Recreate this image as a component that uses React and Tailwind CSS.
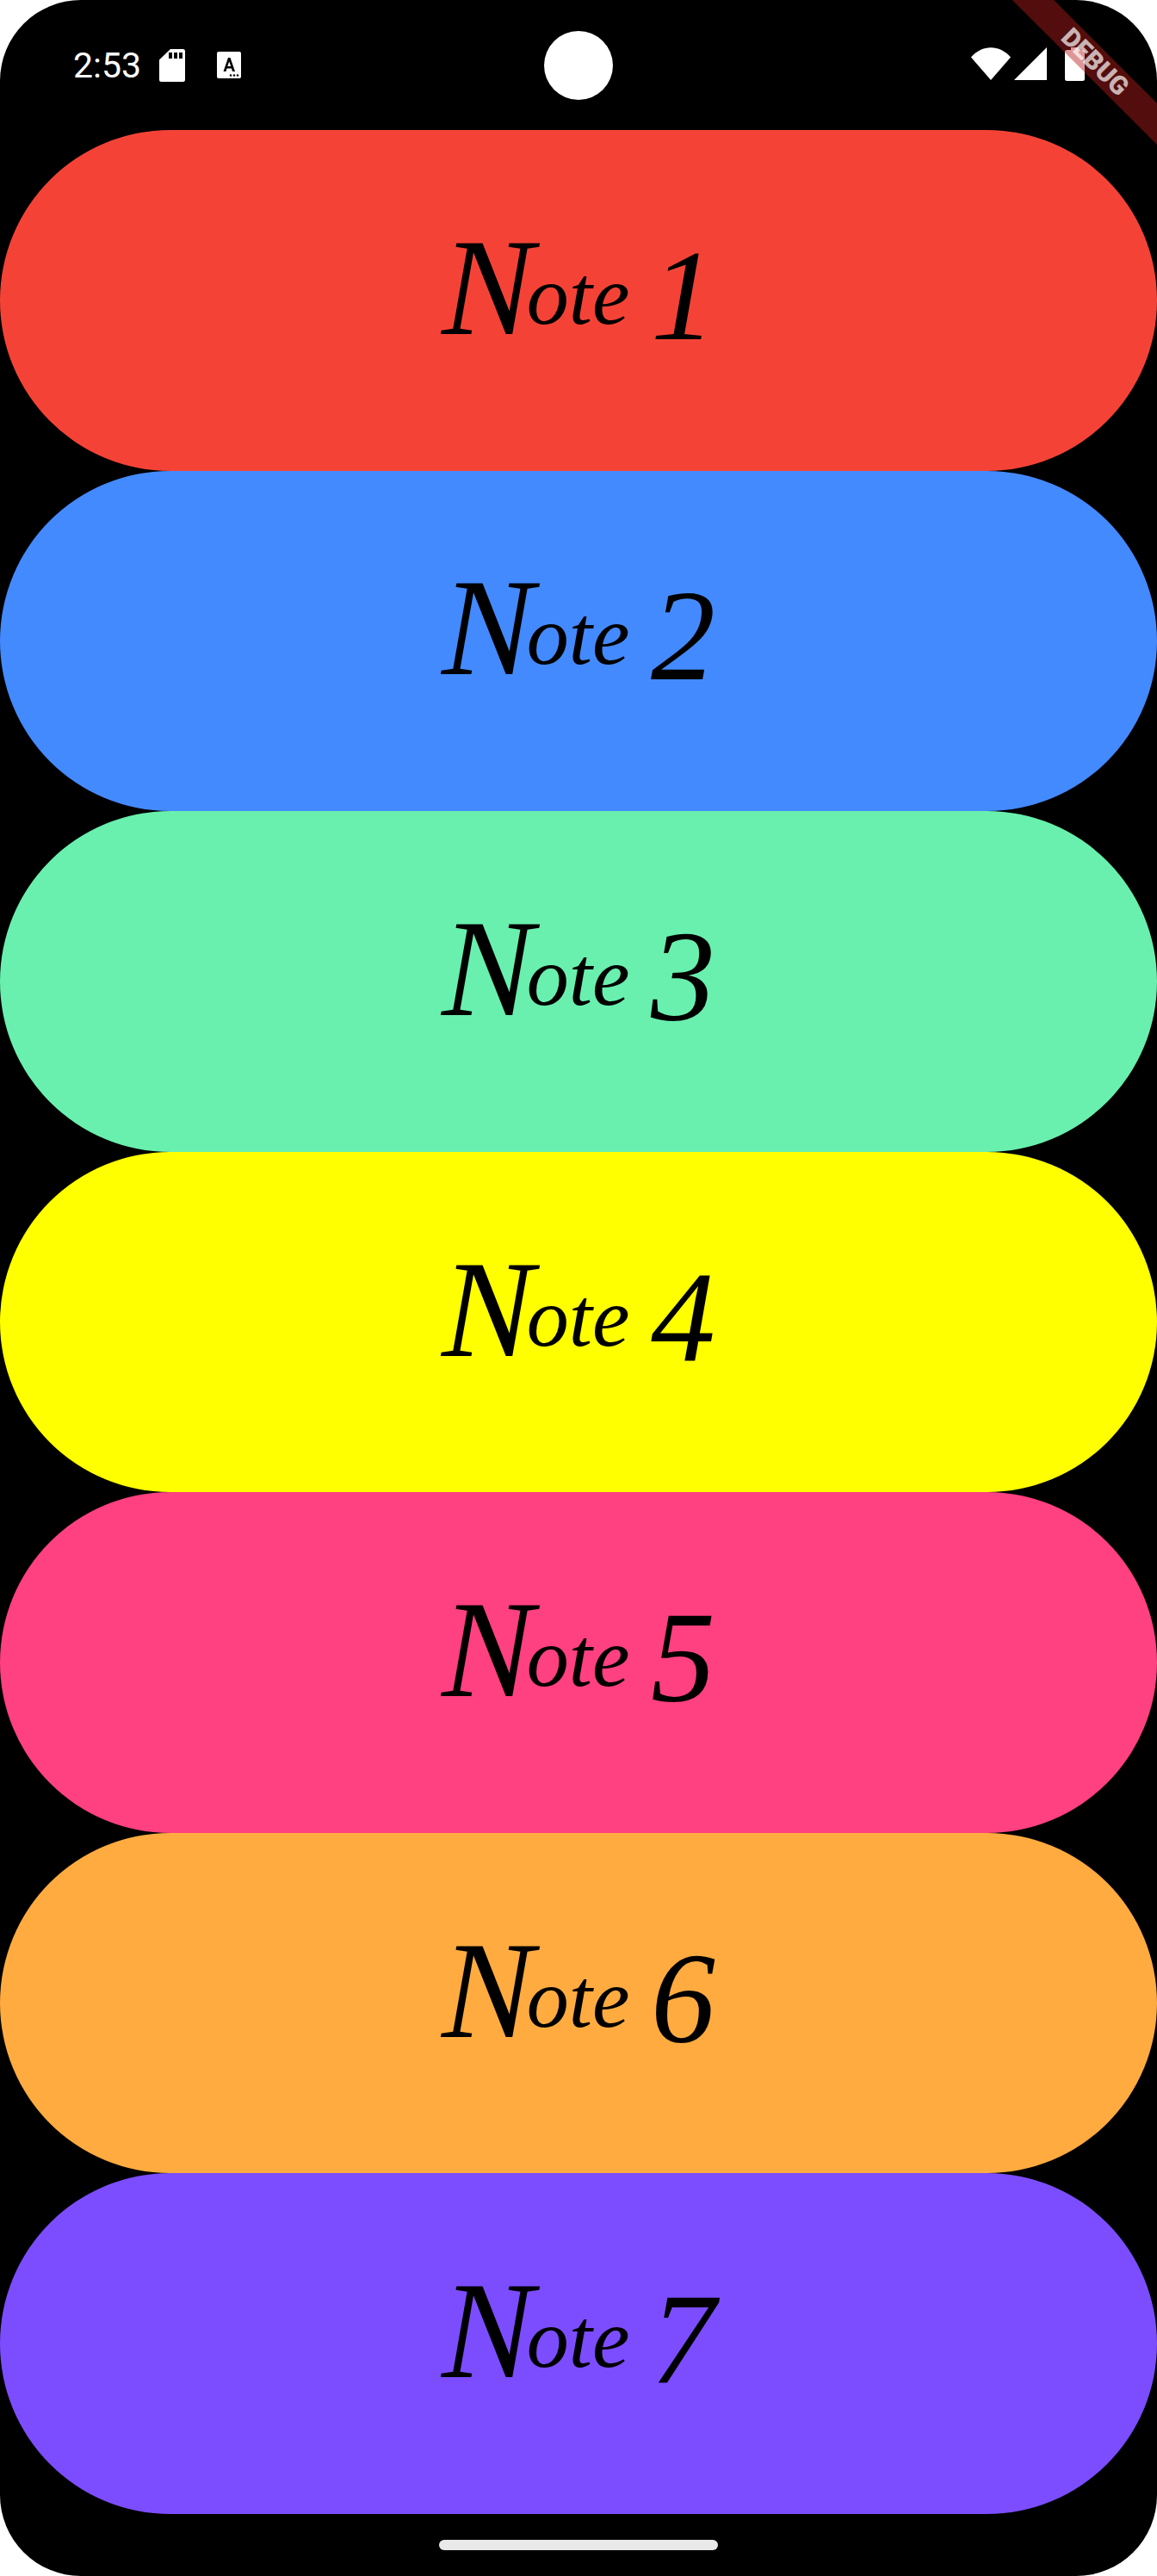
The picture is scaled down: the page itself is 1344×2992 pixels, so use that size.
import React from 'react';

const notes = [
  { digit: '1', color: 'bg-[#f44336]' },
  { digit: '2', color: 'bg-[#448aff]' },
  { digit: '3', color: 'bg-[#69f0ae]' },
  { digit: '4', color: 'bg-[#ffff00]' },
  { digit: '5', color: 'bg-[#ff4081]' },
  { digit: '6', color: 'bg-[#ffab40]' },
  { digit: '7', color: 'bg-[#7c4dff]' },
];

const SdCardIcon = () => (
  <svg width="30" height="38" viewBox="0 0 30 38">
    <path
      fillRule="evenodd"
      fill="#fff"
      d="M13 0H27.5A2.5 2.5 0 0 1 30 2.5V35.500A2.500 2.500 0 0 1 27.500 38H2.500A2.500 2.500 0 0 1 0 35.500V12.500ZM11 4V11H15V4ZM17 4V11H21V4ZM23 4V11H27V4Z"
    />
  </svg>
);

const KeyboardTileIcon = () => (
  <svg width="28" height="31" viewBox="0 0 28 31">
    <rect width="28" height="31" rx="2" fill="#fff" />
    <path d="M13 7H15.500L21 23H18L17 19.500H11.500L10.500 23H7.500ZM14.200 11.500L12.300 17H16.200Z" fill="#000" fillRule="evenodd" />
    <circle cx="16" cy="27.500" r="1.200" fill="#000" />
    <circle cx="20" cy="27.500" r="1.200" fill="#000" />
    <circle cx="24" cy="27.500" r="1.200" fill="#000" />
  </svg>
);

const WifiIcon = () => (
  <svg width="46" height="38" viewBox="0 0 46 38">
    <path d="M0 11.500C13 -3.500 33 -3.500 46 11.500L23 38Z" fill="#fff" />
  </svg>
);

const SignalIcon = () => (
  <svg width="38" height="38" viewBox="0 0 38 38">
    <path d="M38 0V38H0Z" fill="#fff" />
  </svg>
);

const BatteryIcon = () => (
  <svg width="23" height="39" viewBox="0 0 23 39">
    <path d="M7 0H16V3H20.500A2.500 2.500 0 0 1 23 5.500V36.500A2.500 2.500 0 0 1 20.500 39H2.500A2.500 2.500 0 0 1 0 36.500V5.500A2.500 2.500 0 0 1 2.500 3H7Z" fill="#fff" />
  </svg>
);

const StatusBar = () => (
  <div className="relative h-[151px] shrink-0 flex items-start justify-between pl-[85px] pr-[84px] pt-[55px]">
    <div className="flex items-start">
      <span className="font-['Roboto',sans-serif] text-[41px] leading-[42px] text-white">2:53</span>
      <div className="ml-[21px] mt-[2px]"><SdCardIcon /></div>
      <div className="ml-[37px] mt-[5px]"><KeyboardTileIcon /></div>
    </div>
    <div className="flex items-start gap-[4px]">
      <WifiIcon />
      <SignalIcon />
      <div className="ml-[17px]"><BatteryIcon /></div>
    </div>
    {/* camera cutout */}
    <div className="absolute left-[632px] top-[36px] w-[80px] h-[80px] rounded-full bg-white" />
  </div>
);

// the swash capital and the digits are much bigger than the small letters
const NoteCard = ({ digit, color }) => (
  <div className={`flex-1 flex items-center justify-center rounded-full pb-[26px] ${color}`}>
    <span className="font-['Liberation_Serif',serif] italic leading-none text-black whitespace-pre">
      <span className="text-[160px]">N</span>
      <span className="text-[98px] align-[12px] -ml-[8px]">ote </span>
      <span className="text-[150px] align-[-6px]">{digit}</span>
    </span>
  </div>
);

const DebugBanner = () => (
  <div className="absolute left-[1102px] top-[55px] w-[340px] h-[34px] rotate-45 bg-[#b71c1c]/[0.46] flex items-center justify-center">
    <span className="font-['Roboto',sans-serif] font-black text-[30px] leading-none text-white/70">DEBUG</span>
  </div>
);

export default function App() {
  return (
    <div className="w-[1344px] h-[2992px] bg-white">
      <div className="relative w-full h-full overflow-hidden rounded-[94px] bg-black flex flex-col">
        <StatusBar />
        <div className="flex-1 flex flex-col min-h-0">
          {notes.map((note) => (
            <NoteCard key={note.digit} digit={note.digit} color={note.color} />
          ))}
        </div>
        <div className="h-[72px] shrink-0 flex justify-center pt-[30px]">
          <div className="w-[324px] h-[12px] rounded-full bg-[#e9e9e9]" />
        </div>
        <DebugBanner />
      </div>
    </div>
  );
}
